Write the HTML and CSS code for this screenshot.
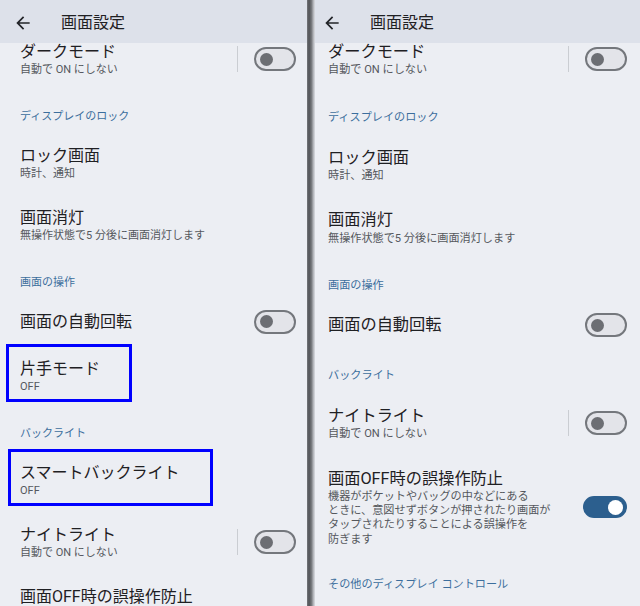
FILE: index.html
```html
<!DOCTYPE html>
<html lang="ja">
<head>
<meta charset="utf-8">
<title>画面設定</title>
<link rel="stylesheet" href="styles.css">
</head>
<body>
<div class="screen">
  <section class="panel panel--left">
    <header class="appbar">
      <svg class="appbar__back" viewBox="0 0 24 24"><path d="M20 11H7.83l5.59-5.59L12 4l-8 8 8 8 1.41-1.41L7.83 13H20v-2z"/></svg>
      <h1 class="appbar__title">画面設定</h1>
    </header>
    <div class="list">
      <div class="item">
        <div class="item__text">
          <div class="item__title">ダークモード</div>
          <div class="item__sub">自動で ON にしない</div>
        </div>
        <span class="item__divider"></span>
        <span class="switch"><span class="switch__knob"></span></span>
      </div>
      <div class="section">ディスプレイのロック</div>
      <div class="item">
        <div class="item__text">
          <div class="item__title">ロック画面</div>
          <div class="item__sub">時計、通知</div>
        </div>
      </div>
      <div class="item">
        <div class="item__text">
          <div class="item__title">画面消灯</div>
          <div class="item__sub">無操作状態で5 分後に画面消灯します</div>
        </div>
      </div>
      <div class="section">画面の操作</div>
      <div class="item item--single">
        <div class="item__text">
          <div class="item__title">画面の自動回転</div>
        </div>
        <span class="switch"><span class="switch__knob"></span></span>
      </div>
      <div class="item">
        <div class="item__text">
          <div class="item__title">片手モード</div>
          <div class="item__sub">OFF</div>
        </div>
        <span class="mark mark--a"></span>
      </div>
      <div class="section">バックライト</div>
      <div class="item">
        <div class="item__text">
          <div class="item__title">スマートバックライト</div>
          <div class="item__sub">OFF</div>
        </div>
        <span class="mark mark--b"></span>
      </div>
      <div class="item">
        <div class="item__text">
          <div class="item__title">ナイトライト</div>
          <div class="item__sub">自動で ON にしない</div>
        </div>
        <span class="item__divider"></span>
        <span class="switch"><span class="switch__knob"></span></span>
      </div>
      <div class="item">
        <div class="item__text">
          <div class="item__title">画面OFF時の誤操作防止</div>
        </div>
      </div>
    </div>
  </section>
  <div class="seam"></div>
  <section class="panel panel--right">
    <header class="appbar">
      <svg class="appbar__back" viewBox="0 0 24 24"><path d="M20 11H7.83l5.59-5.59L12 4l-8 8 8 8 1.41-1.41L7.83 13H20v-2z"/></svg>
      <h1 class="appbar__title">画面設定</h1>
    </header>
    <div class="list">
      <div class="item">
        <div class="item__text">
          <div class="item__title">ダークモード</div>
          <div class="item__sub">自動で ON にしない</div>
        </div>
        <span class="item__divider"></span>
        <span class="switch"><span class="switch__knob"></span></span>
      </div>
      <div class="section">ディスプレイのロック</div>
      <div class="item">
        <div class="item__text">
          <div class="item__title">ロック画面</div>
          <div class="item__sub">時計、通知</div>
        </div>
      </div>
      <div class="item">
        <div class="item__text">
          <div class="item__title">画面消灯</div>
          <div class="item__sub">無操作状態で5 分後に画面消灯します</div>
        </div>
      </div>
      <div class="section">画面の操作</div>
      <div class="item item--single">
        <div class="item__text">
          <div class="item__title">画面の自動回転</div>
        </div>
        <span class="switch"><span class="switch__knob"></span></span>
      </div>
      <div class="section">バックライト</div>
      <div class="item">
        <div class="item__text">
          <div class="item__title">ナイトライト</div>
          <div class="item__sub">自動で ON にしない</div>
        </div>
        <span class="item__divider"></span>
        <span class="switch"><span class="switch__knob"></span></span>
      </div>
      <div class="item item--multi">
        <div class="item__text">
          <div class="item__title">画面OFF時の誤操作防止</div>
          <div class="item__sub">機器がポケットやバッグの中などにある<br>ときに、意図せずボタンが押されたり画面が<br>タップされたりすることによる誤操作を<br>防ぎます</div>
        </div>
        <span class="switch switch--on"><span class="switch__knob"></span></span>
      </div>
      <div class="section">その他のディスプレイ コントロール</div>
    </div>
  </section>
</div>
</body>
</html>
```
FILE: styles.css
```css
* { box-sizing: border-box; }

body {
  margin: 0;
  width: 640px;
  height: 606px;
  overflow: hidden;
  background: #eceef3;
  font-family: Roboto, "Noto Sans CJK JP", sans-serif;
}

.screen {
  display: flex;
  height: 606px;
}

.panel {
  --s: 1;
  --pl: 20px;
  --pr: 11px;
  --hpl: 13px;
  flex: none;
  height: 606px;
  overflow: hidden;
  background: #eceef3;
  display: flex;
  flex-direction: column;
}

.panel--left { width: 307px; }

.panel--right {
  width: 325px;
  --s: 1.014;
  --pl: 13px;
  --pr: 13px;
  --hpl: 7px;
}

.seam {
  flex: none;
  width: 8px;
  background: linear-gradient(to right, #76787c 0%, #505256 25%, #75777b 55%, #b3b5ba 80%, #dcdee3 100%);
}

.appbar {
  position: relative;
  z-index: 1;
  flex: none;
  height: 43px;
  display: flex;
  align-items: center;
  gap: 28px;
  padding-top: 2px;
  padding-left: var(--hpl);
  background: #dde1ea;
}

.appbar__back {
  width: 20px;
  height: 20px;
  fill: #222428;
}

.appbar__title {
  margin: 0;
  font-size: 16px;
  font-weight: 400;
  line-height: 22px;
  color: #1f2023;
}

.list {
  margin-top: -15px;
}

.item {
  position: relative;
  display: flex;
  align-items: center;
  padding: calc(13px * var(--s)) var(--pr) calc(13px * var(--s)) var(--pl);
}

.item--single {
  padding-top: calc(11.5px * var(--s));
  padding-bottom: calc(11.5px * var(--s));
}

.item--multi {
  padding-bottom: 11px;
}

.item__text {
  flex: 1;
  min-width: 0;
}

.item__title {
  font-size: calc(16px * var(--s));
  line-height: calc(22px * var(--s));
  color: #1f2023;
  white-space: nowrap;
}

.item__sub {
  font-size: calc(11px * var(--s));
  line-height: calc(14px * var(--s));
  color: #55585d;
  white-space: nowrap;
}

.item__divider {
  flex: none;
  width: 1px;
  height: 26px;
  margin-right: 16px;
  background: #cacdd2;
}

.section {
  padding: calc(19px * var(--s)) var(--pr) calc(7px * var(--s)) var(--pl);
  font-size: calc(11px * var(--s));
  line-height: calc(16px * var(--s));
  color: #3c6e9d;
}

.switch {
  flex: none;
  width: 42px;
  height: 24px;
  display: flex;
  align-items: center;
  padding: 0 4px;
  border: 2px solid #74777c;
  border-radius: 12px;
  background: #e3e4e9;
}

.switch__knob {
  width: 13px;
  height: 13px;
  border-radius: 50%;
  background: #6c6e73;
}

.switch--on {
  width: 44px;
  height: 22px;
  justify-content: flex-end;
  padding: 0 2px;
  border-color: #2c5f8e;
  background: #2c5f8e;
}

.switch--on .switch__knob {
  width: 15px;
  height: 15px;
  background: #ffffff;
}

.mark {
  position: absolute;
  border: 3px solid #0000ff;
  pointer-events: none;
}

.mark--a {
  left: 6px;
  top: -1px;
  width: 126px;
  height: 58px;
}

.mark--b {
  left: 8px;
  top: 0;
  width: 205px;
  height: 57px;
}
```
